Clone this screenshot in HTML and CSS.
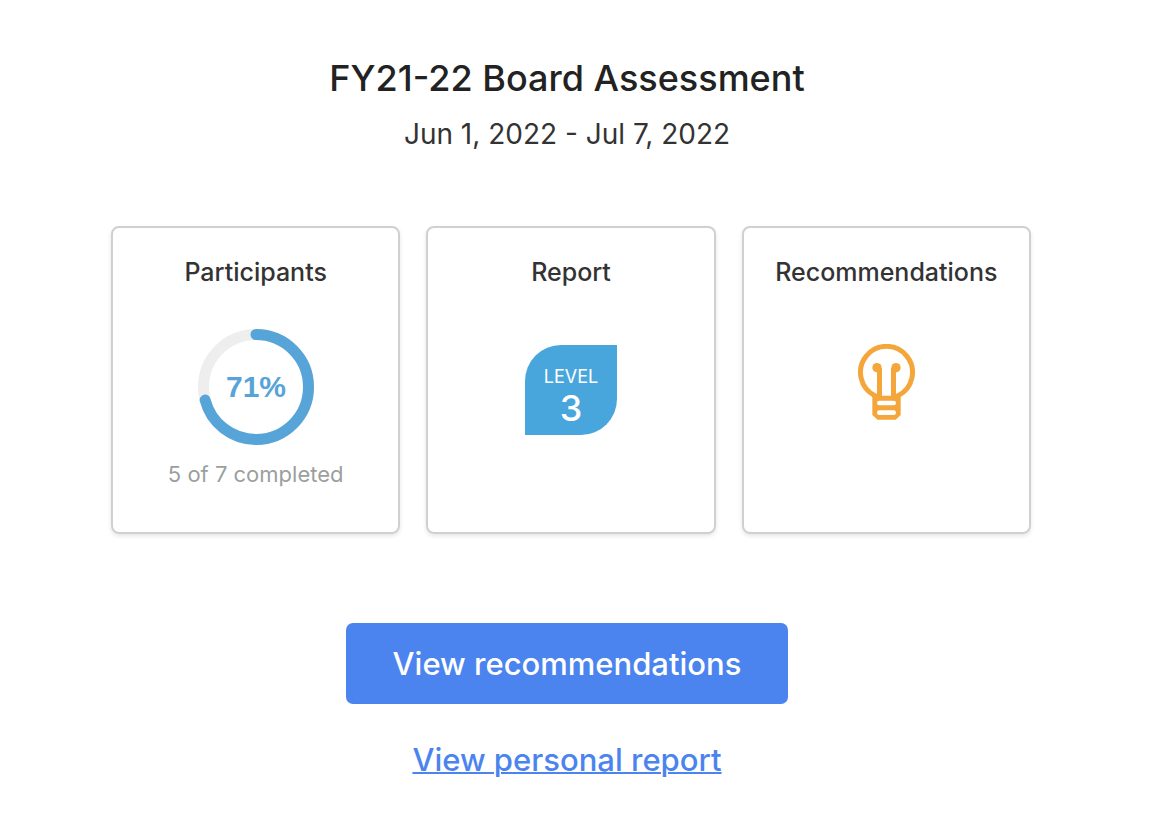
FILE: index.html
```html
<!DOCTYPE html>
<html lang="en">
<head>
<meta charset="utf-8">
<meta name="viewport" content="width=device-width, initial-scale=1">
<title>FY21-22 Board Assessment</title>
<link rel="stylesheet" href="styles.css">
</head>
<body>
<main class="page">
  <header class="header">
    <h1 class="title">FY21-22 Board Assessment</h1>
    <p class="dates">Jun 1, 2022 - Jul 7, 2022</p>
  </header>
  <section class="cards">
    <article class="card">
      <h2 class="card-title">Participants</h2>
      <div class="card-body">
        <svg class="ring" viewBox="0 0 116 116" role="img" aria-label="71% completed">
          <circle class="ring-track" cx="58" cy="58" r="52.5"/>
          <circle class="ring-value" cx="58" cy="58" r="52.5" pathLength="100" stroke-dasharray="71 100" transform="rotate(-90 58 58)"/>
          <text class="ring-text" x="58" y="68">71%</text>
        </svg>
      </div>
      <p class="card-note">5 of 7 completed</p>
    </article>
    <article class="card">
      <h2 class="card-title">Report</h2>
      <div class="card-body">
        <div class="badge">
          <span class="badge-label">LEVEL</span>
          <span class="badge-value">3</span>
        </div>
      </div>
    </article>
    <article class="card">
      <h2 class="card-title">Recommendations</h2>
      <div class="card-body">
        <svg class="bulb" viewBox="36 37 171 226" aria-hidden="true">
          <path class="bulb-line" d="M87 194V191A78 78 0 1 1 156 191V194M100.5 108V194M142.5 108V194"/>
          <circle class="bulb-fill" cx="93" cy="107" r="14"/>
          <circle class="bulb-fill" cx="150" cy="107" r="14"/>
          <path class="bulb-fill" fill-rule="evenodd" d="M79 191H164V249L149 263H95L79 249ZM100 206A7 7 0 0 0 100 220H143A7 7 0 0 0 143 206ZM100 235A7 7 0 0 0 100 249H143A7 7 0 0 0 143 235Z"/>
        </svg>
      </div>
    </article>
  </section>
  <div class="actions">
    <button class="button" type="button">View recommendations</button>
    <a class="link" href="#personal-report">View personal report</a>
  </div>
</main>
</body>
</html>
```
FILE: styles.css
```css
* {
  box-sizing: border-box;
}

body {
  margin: 0;
  background: #fff;
  color: #333;
  font-family: Inter, "Liberation Sans", sans-serif;
}

h1, h2, p {
  margin: 0;
}

.page {
  display: flex;
  flex-direction: column;
  align-items: center;
  padding: 54px 36px 40px 0;
}

.header {
  text-align: center;
}

.title {
  color: #222;
  font-size: 36px;
  font-weight: 500;
  line-height: 48px;
}

.dates {
  margin-top: 12px;
  font-size: 28px;
  line-height: 40px;
}

.cards {
  display: grid;
  grid-template-columns: repeat(3, 1fr);
  gap: 26px;
  width: 100%;
  max-width: 928px;
  margin-top: 72px;
  padding-left: 8px;
}

.card {
  display: flex;
  flex-direction: column;
  align-items: center;
  min-height: 308px;
  padding: 28px 8px;
  border: 2px solid #d0d0d0;
  border-radius: 8px;
  box-shadow: 0 2px 4px rgba(0, 0, 0, 0.1);
}

.card-title {
  font-size: 25px;
  font-weight: 500;
  line-height: 32px;
}

.card-body {
  display: flex;
  align-items: flex-start;
  justify-content: center;
  margin-top: 41px;
}

.ring {
  width: 116px;
  height: 116px;
}

.ring-track,
.ring-value {
  fill: none;
  stroke: #eee;
  stroke-width: 11;
}

.ring-value {
  stroke: #57a4d9;
  stroke-linecap: round;
}

.ring-text {
  fill: #57a4d9;
  font-family: "Liberation Sans", sans-serif;
  font-size: 30px;
  font-weight: 700;
  text-anchor: middle;
}

.card-note {
  margin-top: 13px;
  color: #9b9f9e;
  font-size: 22px;
  line-height: 32px;
}

.badge {
  display: flex;
  flex-direction: column;
  align-items: center;
  width: 92px;
  height: 90px;
  margin-top: 16px;
  padding-top: 20px;
  border-radius: 36px 0;
  background: #49a6dd;
  color: #fff;
}

.badge-label {
  font-size: 18px;
  line-height: 24px;
}

.badge-value {
  font-size: 36px;
  font-weight: 500;
  line-height: 38px;
}

.bulb {
  width: 57px;
  height: 76px;
  margin-top: 15px;
}

.bulb-line {
  fill: none;
  stroke: #f4a63a;
  stroke-width: 15;
}

.bulb-fill {
  fill: #f4a63a;
}

.actions {
  display: flex;
  flex-direction: column;
  align-items: center;
  gap: 36px;
  margin-top: 89px;
}

.button {
  padding: 21px 47px 20px;
  border: 0;
  border-radius: 7px;
  background: #4b84ee;
  color: #fff;
  font-family: inherit;
  font-size: 31px;
  font-weight: 500;
  line-height: 40px;
  cursor: pointer;
}

.link {
  color: #4b84ee;
  font-size: 31px;
  font-weight: 500;
  line-height: 40px;
  text-decoration: underline;
  text-decoration-thickness: 2px;
}
```
